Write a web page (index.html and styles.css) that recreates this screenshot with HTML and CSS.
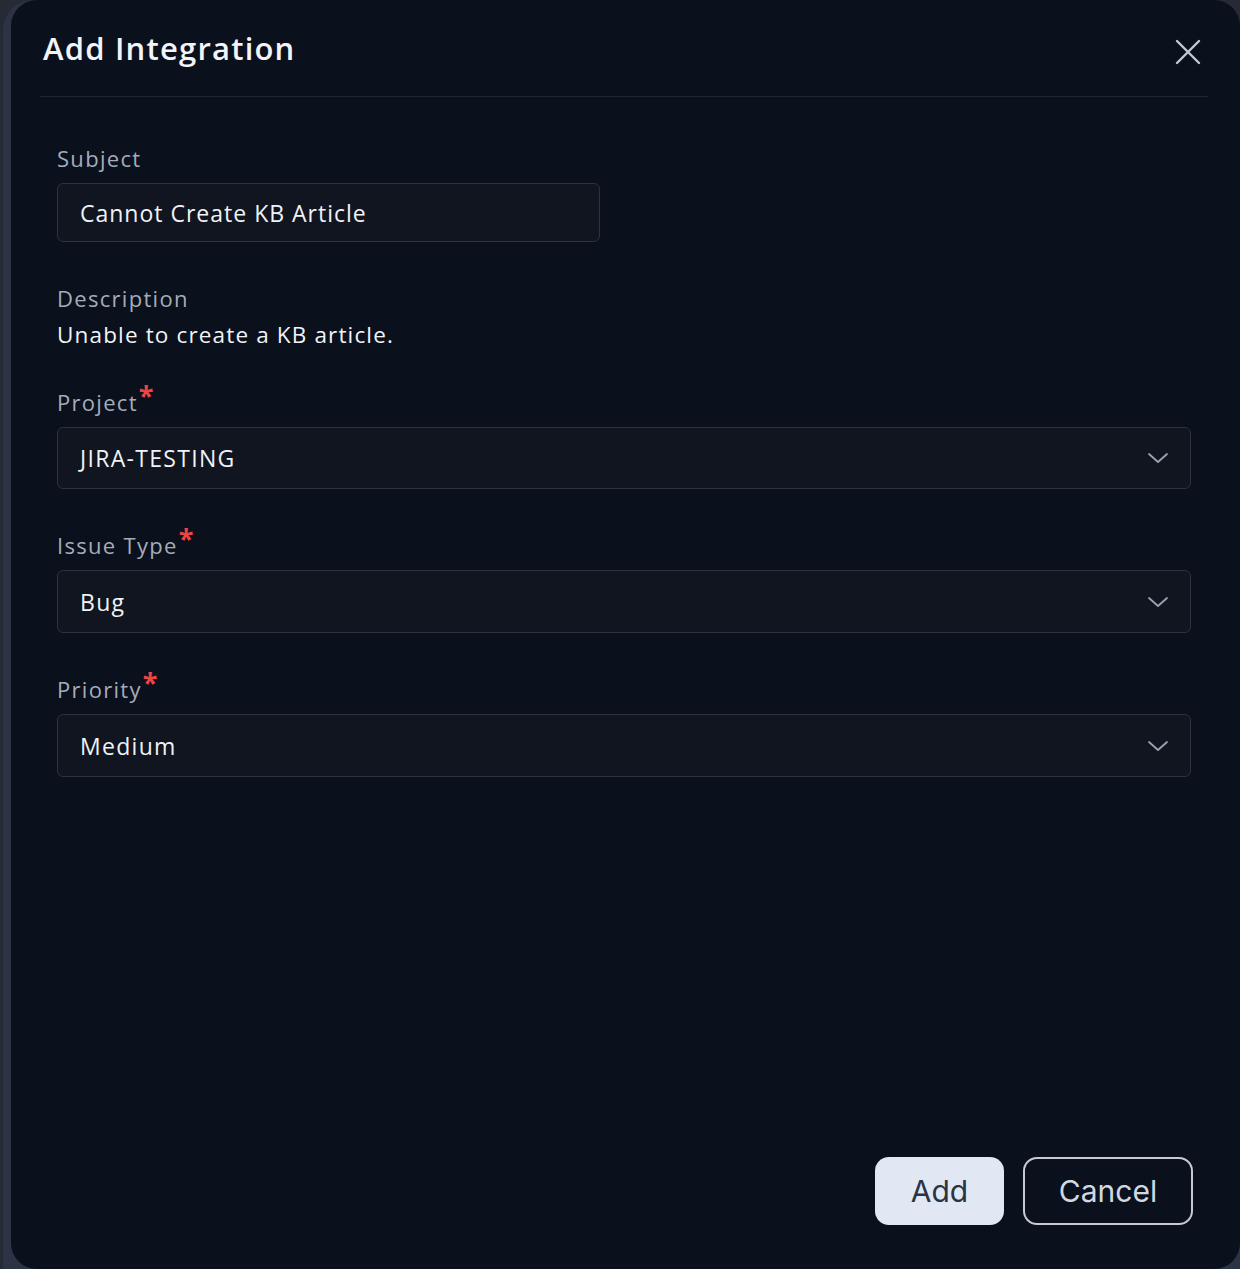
FILE: index.html
```html
<!DOCTYPE html>
<html lang="en">
<head>
<meta charset="utf-8">
<title>Add Integration</title>
<link rel="stylesheet" href="styles.css">
</head>
<body>
<div class="frame">
  <div class="dialog">
    <header class="dialog-header">
      <h1 class="dialog-title">Add Integration</h1>
      <button class="close-btn" aria-label="Close">
        <svg width="28" height="28" viewBox="0 0 28 28"><path d="M3 3 L25 25 M25 3 L3 25" stroke="#c3c9d2" stroke-width="2.4" stroke-linecap="round" fill="none"/></svg>
      </button>
    </header>
    <main class="dialog-body">
      <div class="field">
        <label class="field-label">Subject</label>
        <div class="input input-subject">Cannot Create KB Article</div>
      </div>
      <div class="field field-desc">
        <label class="field-label">Description</label>
        <div class="field-value">Unable to create a KB article.</div>
      </div>
      <div class="field">
        <label class="field-label">Project<span class="req">*</span></label>
        <div class="input select">JIRA-TESTING
          <svg class="chev" width="22" height="12" viewBox="0 0 22 12"><path d="M2 2 L11 10 L20 2" stroke="#9ba3b0" stroke-width="1.8" fill="none" stroke-linecap="round" stroke-linejoin="round"/></svg>
        </div>
      </div>
      <div class="field">
        <label class="field-label">Issue Type<span class="req">*</span></label>
        <div class="input select tall">Bug
          <svg class="chev" width="22" height="12" viewBox="0 0 22 12"><path d="M2 2 L11 10 L20 2" stroke="#9ba3b0" stroke-width="1.8" fill="none" stroke-linecap="round" stroke-linejoin="round"/></svg>
        </div>
      </div>
      <div class="field">
        <label class="field-label">Priority<span class="req">*</span></label>
        <div class="input select tall">Medium
          <svg class="chev" width="22" height="12" viewBox="0 0 22 12"><path d="M2 2 L11 10 L20 2" stroke="#9ba3b0" stroke-width="1.8" fill="none" stroke-linecap="round" stroke-linejoin="round"/></svg>
        </div>
      </div>
    </main>
    <footer class="dialog-footer">
      <button class="btn btn-primary">Add</button>
      <button class="btn btn-outline">Cancel</button>
    </footer>
  </div>
</div>
</body>
</html>
```
FILE: styles.css
```css
html, body {
  margin: 0;
  padding: 0;
  height: 100%;
}
body {
  background: #262a34;
  font-family: "Open Sans", "Noto Sans", sans-serif;
  overflow: hidden;
}
.frame {
  margin-left: 3px;
  height: 1300px;
  background: #2b3344;
  border-radius: 30px;
  padding-left: 8px;
  box-sizing: border-box;
}
.dialog {
  height: 1269px;
  background: #0a101c;
  border-radius: 26px;
  display: flex;
  flex-direction: column;
  box-sizing: border-box;
}
.dialog-header {
  display: flex;
  align-items: center;
  justify-content: space-between;
  margin: 0 32px 0 29px;
  height: 97px;
  border-bottom: 1px solid #1f2734;
  box-sizing: border-box;
  padding: 0 6px 0 3px;
}
.dialog-title {
  margin: 0;
  font-size: 31px;
  font-weight: 600;
  color: #f2f4f7;
  letter-spacing: 1.2px;
}
.close-btn {
  background: none;
  border: 0;
  padding: 0;
  width: 28px;
  height: 28px;
  margin-top: 8px;
  cursor: pointer;
}
.dialog-body {
  display: flex;
  flex-direction: column;
  gap: 41px;
  padding: 46px 49px 0 46px;
}
.field {
  display: flex;
  flex-direction: column;
  gap: 10px;
}
.field-desc {
  gap: 7px;
  margin-bottom: -4px;
}
.field-label {
  font-size: 22px;
  line-height: 30px;
  height: 30px;
  color: #a4acb9;
  letter-spacing: 1.3px;
}
.req {
  color: #ef4444;
  font-size: 27px;
  font-weight: 700;
  line-height: 0;
  position: relative;
  top: -6px;
  margin-left: 1px;
  letter-spacing: 0;
}
.field-value {
  font-size: 22.5px;
  line-height: 30px;
  color: #f1f3f7;
  letter-spacing: 1.15px;
}
.input {
  display: flex;
  align-items: center;
  justify-content: space-between;
  box-sizing: border-box;
  background: #10151f;
  border: 1.5px solid #2c323e;
  border-radius: 6px;
  padding: 0 22px;
  font-size: 23px;
  color: #eff2f6;
  letter-spacing: 1.3px;
}
.input-subject {
  width: 543px;
  height: 59px;
  letter-spacing: 1px;
}
.select {
  height: 62px;
  padding-right: 21px;
}
.select.tall {
  height: 63px;
}
.chev {
  display: block;
}
.dialog-footer {
  margin-top: auto;
  display: flex;
  justify-content: flex-end;
  gap: 19px;
  padding: 0 47px 44px 0;
}
.btn {
  font-family: Inter, "Liberation Sans", sans-serif;
  font-size: 30px;
  height: 68px;
  border-radius: 14px;
  cursor: pointer;
  box-sizing: border-box;
  letter-spacing: 0;
}
.btn-primary {
  width: 129px;
  background: #e2e8f3;
  color: #2b3446;
  border: 0;
}
.btn-outline {
  width: 170px;
  background: transparent;
  color: #d2d8e2;
  border: 2px solid #c6cad1;
}
```
